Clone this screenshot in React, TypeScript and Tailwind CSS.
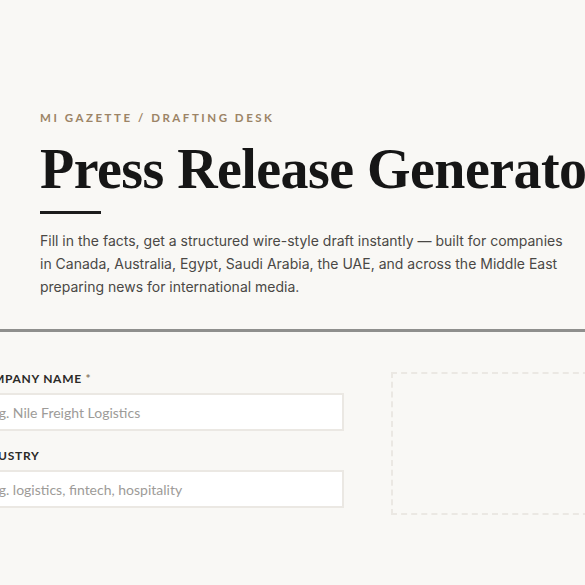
export default function App() {
  return (
    <div className="min-h-screen w-full overflow-hidden bg-[#f9f8f5] font-['Inter','Lato',sans-serif] text-[#1a1a1a]">
      <header className="px-10 pt-[111px] pb-[31px]">
        <p className="font-['Lato',sans-serif] text-[11.5px] font-bold uppercase leading-[14px] tracking-[0.22em] text-[#9c8466]">
          MI Gazette / Drafting Desk
        </p>
        <h1 className="mt-[14px] whitespace-nowrap font-['Liberation_Serif',serif] text-[56px] font-bold leading-[60px] tracking-[-0.01em] text-[#161616]">
          Press Release Generator
        </h1>
        <div className="mt-[12px] h-[3px] w-[61px] bg-[#1c1c1c]" />
        <p className="mt-[15px] whitespace-nowrap text-[14px] leading-[23px] text-[#4a4845]">
          Fill in the facts, get a structured wire-style draft instantly — built for companies
          <br />
          in Canada, Australia, Egypt, Saudi Arabia, the UAE, and across the Middle East
          <br />
          preparing news for international media.
        </p>
      </header>

      <div className="border-t-[3px] border-[#8f8f8d]" />

      <main className="ml-[-26px] grid grid-cols-[370px_1fr] gap-[47px] pt-[40px]">
        <form className="flex flex-col gap-[18px]">
          <label className="flex flex-col gap-[7px]">
            <span className="font-['Lato',sans-serif] text-[12px] font-bold uppercase leading-[14px] tracking-[0.06em] text-[#2b2a28]">
              Company Name <span className="text-[#8a7a66]">*</span>
            </span>
            <input
              className="h-[38px] w-full border-2 border-[#ebe8e3] bg-white px-[12px] font-['Lato',sans-serif] text-[14px] text-[#333] outline-none placeholder:text-[#9d9b98]"
              placeholder="e.g. Nile Freight Logistics"
            />
          </label>
          <label className="flex flex-col gap-[7px]">
            <span className="font-['Lato',sans-serif] text-[12px] font-bold uppercase leading-[14px] tracking-[0.06em] text-[#2b2a28]">
              Industry
            </span>
            <input
              className="h-[38px] w-full border-2 border-[#ebe8e3] bg-white px-[12px] font-['Lato',sans-serif] text-[14px] text-[#333] outline-none placeholder:text-[#9d9b98]"
              placeholder="e.g. logistics, fintech, hospitality"
            />
          </label>
        </form>

        <aside className="h-[143px] w-[400px] border-2 border-dashed border-[#ebe8e3]" />
      </main>
    </div>
  );
}
